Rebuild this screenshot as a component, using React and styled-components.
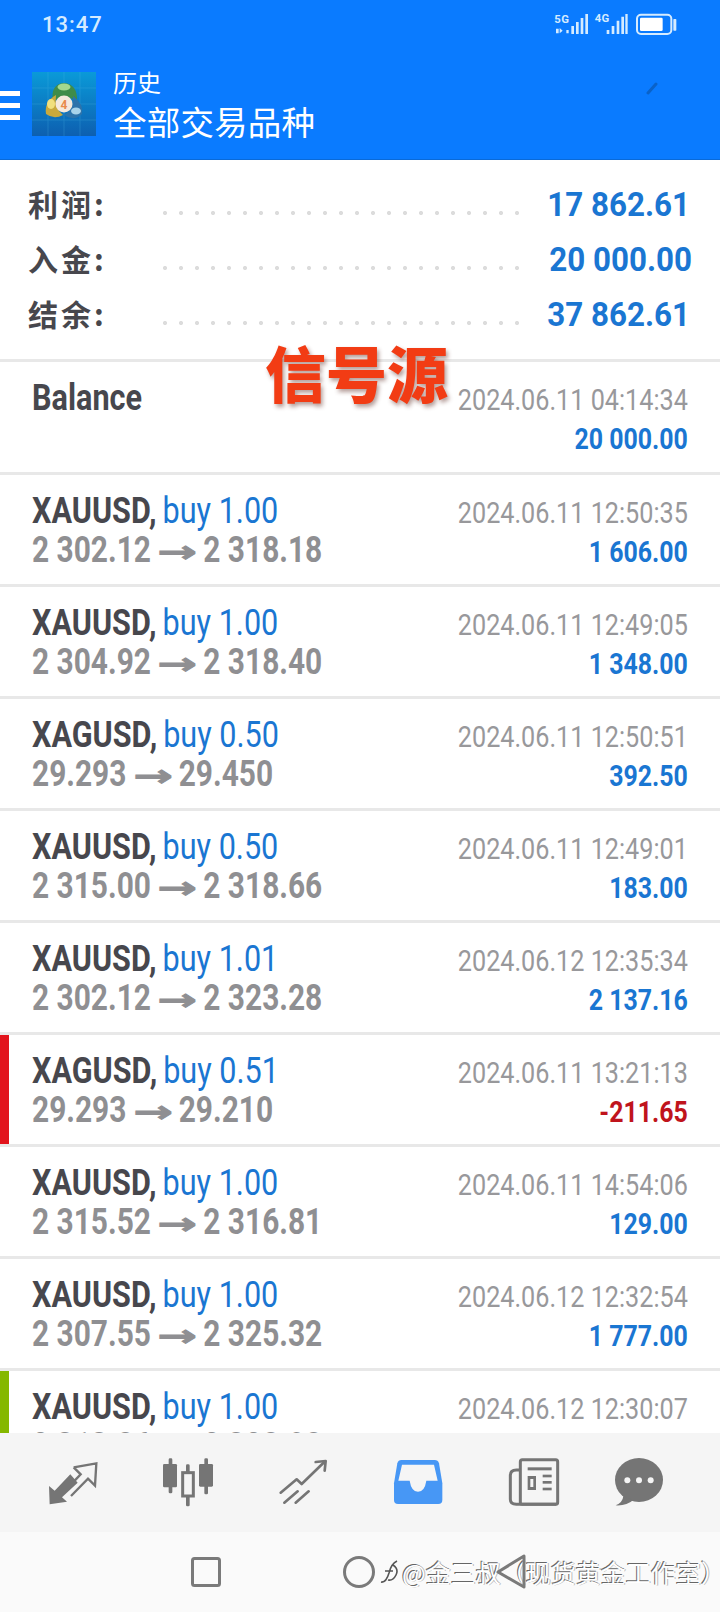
import React from "react";
import styled, { createGlobalStyle } from "styled-components";

const GlobalStyle = createGlobalStyle`
  html, body {
    margin: 0;
    padding: 0;
    background: #fff;
    font-family: Roboto, "Noto Sans CJK SC", sans-serif;
  }
`;

const Page = styled.div`
  position: relative;
  display: flex;
  flex-direction: column;
  width: 720px;
  height: 1612px;
  overflow: hidden;
`;

const Header = styled.header`
  flex: none;
  height: 160px;
  box-sizing: border-box;
  background: #0a7bff;
  border-bottom: 1px solid #0a6ad8;
  color: #fff;
`;

const StatusBar = styled.div`
  display: flex;
  justify-content: space-between;
  align-items: center;
  height: 48px;
  padding: 0 42px 0 42px;
  color: #d5ebff;
  font-size: 22px;
  font-weight: 500;
  letter-spacing: 1px;
`;

const AppBar = styled.div`
  position: relative;
  display: flex;
  align-items: center;
  height: 64px;
  margin-top: 24px;
`;

const Burger = styled.div`
  display: flex;
  flex-direction: column;
  gap: 7px;
  width: 20px;
  margin: 3px 12px 0 0;
  span {
    display: block;
    height: 5px;
    background: #fff;
  }
`;

const Titles = styled.div`
  margin-left: 17px;
  font-family: "Noto Sans CJK SC", sans-serif;
`;

const SubTitle = styled.div`
  font-size: 24px;
  line-height: 32px;
  height: 33px;
`;

const Title = styled.div`
  font-size: 33.5px;
  line-height: 44px;
  letter-spacing: 0.2px;
`;

const Tick = styled.svg`
  position: absolute;
  left: 645px;
  top: 9px;
`;

const Summary = styled.section`
  flex: none;
  height: 199px;
  box-sizing: border-box;
  padding-top: 16px;
`;

const SummaryRow = styled.div`
  display: flex;
  align-items: center;
  height: 55px;
  padding: 0 30px 0 28px;
`;

const SummaryLabel = styled.span`
  width: 135px;
  flex: none;
  margin-top: -2px;
  font-family: "Noto Sans CJK SC", sans-serif;
  font-size: 30px;
  font-weight: 700;
  color: #47474d;
  letter-spacing: 3px;
`;

const Leader = styled.span`
  flex: none;
  width: 360px;
  height: 4px;
  margin-top: 18px;
  background: radial-gradient(circle at 2px 2px, #dcdcdc 2px, transparent 2.2px) 0 0 / 16px 4px repeat-x;
`;

const SummaryValue = styled.span`
  flex: 1;
  margin-top: 2px;
  text-align: right;
  font-size: 33px;
  font-weight: 700;
  color: #1a76d2;
  white-space: nowrap;
  transform: scaleX(0.95);
  transform-origin: right center;
  margin-right: ${(p) => (p.$wide ? -2 : 0)}px;
`;

const List = styled.div`
  flex: 1;
  min-height: 0;
  overflow: hidden;
`;

const Row = styled.div`
  position: relative;
  display: flex;
  justify-content: space-between;
  box-sizing: border-box;
  height: ${(p) => p.$height || 112}px;
  padding: 17px 32px 0;
  border-top: 3px solid #e8e8e8;
  &::before {
    content: "";
    display: ${(p) => (p.$mark ? "block" : "none")};
    position: absolute;
    left: 0;
    top: 0;
    bottom: 0;
    width: 9px;
    background: ${(p) => p.$mark};
  }
`;

const Left = styled.div`
  flex: none;
`;

const Right = styled.div`
  flex: none;
  text-align: right;
`;

const Line = styled.div`
  white-space: nowrap;
  font-size: ${(p) => p.$size || 36}px;
  line-height: 38px;
  font-weight: 700;
  transform: scaleX(${(p) => p.$squeeze || 0.85});
  transform-origin: ${(p) => (p.$right ? "right" : "left")} center;
`;

const Symbol = styled.span`
  color: #47474d;
`;

const Deal = styled.span`
  margin-left: -2px;
  color: #1a76d2;
  font-weight: 400;
`;

const Prices = styled(Line)`
  margin-top: 1px;
  color: #8f8f92;
`;

const Arrow = styled.span`
  display: inline-block;
  margin: 0 10px;
  font-family: "DejaVu Sans", sans-serif;
  font-size: 30px;
  line-height: 1;
  transform: scaleX(1.9);
  -webkit-text-stroke: 0.9px #8f8f92;
`;

const DateLine = styled(Line)`
  color: #98989b;
  font-weight: 400;
  margin-top: 2px;
`;

const Amount = styled(Line)`
  margin-top: 1px;
  color: ${(p) => (p.$loss ? "#c0141c" : "#1a76d2")};
`;

const BottomNav = styled.nav`
  flex: none;
  display: grid;
  grid-template-columns: repeat(5, 115px) 98px;
  justify-items: center;
  align-items: center;
  height: 99px;
  padding: 0 0 0 15px;
  background: #f5f5f5;
`;

const NavIcon = styled.svg`
  display: block;
  width: 60px;
  height: 60px;
  margin-top: -2px;
`;

const SystemBar = styled.div`
  flex: none;
  position: relative;
  height: 80px;
  background: #fafafa;
`;

const SystemIcons = styled.svg`
  display: block;
  position: relative;
  z-index: 1;
`;

const Watermark = styled.div`
  position: absolute;
  left: 380px;
  top: 24px;
  display: flex;
  align-items: center;
  gap: 2px;
  height: 32px;
  font-family: "Noto Sans CJK SC", sans-serif;
  font-size: 25px;
  white-space: nowrap;
  color: #fff;
  text-shadow: -1px -1px 0 #666, 1px 0 0 #bbb;
`;

const Stamp = styled.div`
  position: absolute;
  left: 265px;
  top: 332px;
  font-family: "Noto Sans CJK SC", sans-serif;
  font-size: 61px;
  font-weight: 900;
  line-height: 80px;
  color: #f23c14;
  white-space: nowrap;
  text-shadow: 2px 3px 4px rgba(90, 40, 30, 0.45);
`;

const deals = [
  { s: "XAUUSD", v: "1.00", p: ["2 302.12", "2 318.18"], d: "2024.06.11 12:50:35", a: "1 606.00" },
  { s: "XAUUSD", v: "1.00", p: ["2 304.92", "2 318.40"], d: "2024.06.11 12:49:05", a: "1 348.00" },
  { s: "XAGUSD", v: "0.50", p: ["29.293", "29.450"], d: "2024.06.11 12:50:51", a: "392.50" },
  { s: "XAUUSD", v: "0.50", p: ["2 315.00", "2 318.66"], d: "2024.06.11 12:49:01", a: "183.00" },
  { s: "XAUUSD", v: "1.01", p: ["2 302.12", "2 323.28"], d: "2024.06.12 12:35:34", a: "2 137.16" },
  { s: "XAGUSD", v: "0.51", p: ["29.293", "29.210"], d: "2024.06.11 13:21:13", a: "-211.65", loss: true, mark: "#e2141c" },
  { s: "XAUUSD", v: "1.00", p: ["2 315.52", "2 316.81"], d: "2024.06.11 14:54:06", a: "129.00" },
  { s: "XAUUSD", v: "1.00", p: ["2 307.55", "2 325.32"], d: "2024.06.12 12:32:54", a: "1 777.00" },
  { s: "XAUUSD", v: "1.00", p: ["2 313.86", "2 328.08"], d: "2024.06.12 12:30:07", a: "1 522.00", mark: "#85b800" },
];

const totals = [
  { label: "利润:", value: "17 862.61" },
  { label: "入金:", value: "20 000.00", wide: true },
  { label: "结余:", value: "37 862.61" },
];

const StatusIcons = () => (
  <svg width="124" height="28" viewBox="170 30 372 84" fill="#d5ebff">
    <text x="171" y="68" fontFamily="Roboto" fontWeight="700" fontSize="34">5G</text>
    <path d="M176 86h8v14h-8zM187 84l9 8-9 8zM207 90h7v10h-7zM222 78h8v24h-8zM236 66h8v36h-8zM250 54h8v48h-8zM264 42h8v60h-8z" />
    <text x="292" y="66" fontFamily="Roboto" fontWeight="700" fontSize="34">4G</text>
    <path d="M328 90h8v12h-8zM343 78h8v24h-8zM358 62h8v40h-8zM372 50h8v52h-8zM384 42h7v60h-7z" />
    <rect x="419" y="44" width="103" height="58" rx="12" fill="none" stroke="#d5ebff" strokeWidth="6" />
    <rect x="428" y="53" width="68" height="40" rx="4" fill="#fff" />
    <rect x="528" y="57" width="9" height="35" rx="2" />
  </svg>
);

const MetaLogo = () => (
  <svg width="64" height="64" viewBox="0 0 64 64">
    <defs>
      <linearGradient id="tile" x1="0" y1="0" x2="0" y2="1">
        <stop offset="0" stopColor="#0a9ad8" />
        <stop offset="1" stopColor="#0d5fb0" />
      </linearGradient>
    </defs>
    <rect width="64" height="64" fill="url(#tile)" />
    <path d="M0 16h64M0 32h64M0 48h64M16 0v64M32 0v64M48 0v64" stroke="#4fb8e6" strokeWidth="1" opacity="0.25" />
    <path d="M21 30 Q18 12 32 11 Q46 12 45 30 Q33 20 21 30 Z" fill="#3f8c4a" />
    <ellipse cx="32" cy="15" rx="6.5" ry="3.5" fill="#a3d88f" />
    <path d="M24 23 Q12 30 14 42 Q22 48 31 43 Q22 36 24 23 Z" fill="#c9a93c" />
    <ellipse cx="19" cy="32" rx="4" ry="5" fill="#f1e07d" />
    <path d="M41 24 Q52 32 50 42 Q42 50 32 43 Q42 38 41 24 Z" fill="#2c73ab" />
    <ellipse cx="44" cy="39" rx="5" ry="3.5" fill="#a7d3ea" />
    <circle cx="32" cy="32" r="8.5" fill="#f5e9dc" />
    <text x="32" y="36.5" textAnchor="middle" fontFamily="Roboto" fontWeight="700" fontSize="12" fill="#e88a4a">4</text>
  </svg>
);

const NavSvg = ({ cx, children }) => (
  <NavIcon viewBox={`${cx - 90} 96 180 180`}>{children}</NavIcon>
);

const App = () => (
  <Page>
    <GlobalStyle />
    <Header>
      <StatusBar>
        <span>13:47</span>
        <StatusIcons />
      </StatusBar>
      <AppBar>
        <Burger>
          <span />
          <span />
          <span />
        </Burger>
        <MetaLogo />
        <Titles>
          <SubTitle>历史</SubTitle>
          <Title>全部交易品种</Title>
        </Titles>
        <Tick width="14" height="14" viewBox="0 0 14 14">
          <path d="M3 12 L11 3" stroke="#0a62c8" strokeWidth="3" strokeLinecap="round" />
        </Tick>
      </AppBar>
    </Header>

    <Summary>
      {totals.map((t) => (
        <SummaryRow key={t.label}>
          <SummaryLabel>{t.label}</SummaryLabel>
          <Leader />
          <SummaryValue $wide={t.wide}>{t.value}</SummaryValue>
        </SummaryRow>
      ))}
    </Summary>

    <List>
      <Row $height={113}>
        <Left>
          <Line $size={36}>
            <Symbol>Balance</Symbol>
          </Line>
        </Left>
        <Right>
          <DateLine $right $size={30} $squeeze={0.84}>2024.06.11 04:14:34</DateLine>
          <Amount $right $size={30} $squeeze={0.83}>20 000.00</Amount>
        </Right>
      </Row>
      {deals.map((d) => (
        <Row key={d.d} $mark={d.mark}>
          <Left>
            <Line>
              <Symbol>{d.s},</Symbol> <Deal>buy {d.v}</Deal>
            </Line>
            <Prices $squeeze={0.83}>
              {d.p[0]} <Arrow>→</Arrow> {d.p[1]}
            </Prices>
          </Left>
          <Right>
            <DateLine $right $size={30} $squeeze={0.84}>{d.d}</DateLine>
            <Amount $right $size={30} $squeeze={0.83} $loss={d.loss}>{d.a}</Amount>
          </Right>
        </Row>
      ))}
    </List>

    <BottomNav>
      <NavSvg cx={220}>
        <path d="M148 198 L165 212 L212 163 L234 188 L187 232 L202 245 L150 253 Z" fill="#757575" />
        <path d="M222 142 L290 130 L286 197 L265 176 L214 228 M222 142 L243 163 L225 182" fill="none" stroke="#757575" strokeWidth="7" />
      </NavSvg>
      <NavSvg cx={565}>
        <g fill="#757575">
          <rect x="507" y="115" width="11" height="105" rx="4" />
          <rect x="490" y="132" width="42" height="70" rx="4" />
          <rect x="614" y="115" width="11" height="108" rx="4" />
          <rect x="598" y="132" width="42" height="68" rx="4" />
          <rect x="559" y="133" width="11" height="126" rx="4" />
        </g>
        <rect x="549" y="158" width="32" height="70" fill="#f5f5f5" stroke="#757575" strokeWidth="9" />
      </NavSvg>
      <NavSvg cx={909}>
        <g fill="none" stroke="#757575" strokeWidth="8" strokeLinecap="round" strokeLinejoin="round">
          <path d="M842 218 L890 178 L905 192 L973 126" />
          <path d="M947 126 L977 123 L974 152" />
          <path d="M853 248 L893 214 M887 248 L926 214" />
        </g>
      </NavSvg>
      <NavSvg cx={1255}>
        <path d="M1205 120 H1305 Q1315 120 1318 130 L1328 190 V240 Q1328 252 1316 252 H1195 Q1183 252 1183 240 V190 L1193 130 Q1196 120 1205 120 Z" fill="#4797f5" />
        <path d="M1207 134 H1303 L1314 182 H1280 Q1275 215 1255 215 Q1235 215 1230 182 H1196 Z" fill="#f5f5f5" />
      </NavSvg>
      <NavSvg cx={1600}>
        <g fill="none" stroke="#757575" strokeWidth="9">
          <rect x="1562" y="119" width="112" height="134" rx="6" />
          <path d="M1562 150 H1550 Q1532 150 1532 166 V238 Q1532 253 1550 253 H1670" />
        </g>
        <g fill="#757575">
          <rect x="1584" y="142" width="72" height="9" />
          <path d="M1584 168 H1609 V210 H1584 Z M1592 177 V201 H1601 V177 Z" fillRule="evenodd" />
          <rect x="1629" y="164" width="27" height="8" />
          <rect x="1629" y="183" width="27" height="8" />
          <rect x="1629" y="203" width="27" height="8" />
        </g>
      </NavSvg>
      <NavSvg cx={1917}>
        <ellipse cx="1917" cy="180" rx="72" ry="66" fill="#757575" />
        <path d="M1870 228 Q1868 248 1847 256 Q1880 258 1900 240 Z" fill="#757575" />
        <circle cx="1882" cy="181" r="9" fill="#f5f5f5" />
        <circle cx="1917" cy="181" r="9" fill="#f5f5f5" />
        <circle cx="1952" cy="181" r="9" fill="#f5f5f5" />
      </NavSvg>
    </BottomNav>

    <SystemBar>
      <SystemIcons width="720" height="80" viewBox="0 1532 720 80">
        <g fill="none" stroke="#7a7a7a" strokeWidth="3">
          <rect x="192.5" y="1558.5" width="27" height="27" rx="2" />
          <circle cx="359" cy="1572" r="14.5" />
          <path d="M498 1572 L524 1556 V1587 Z" strokeLinejoin="round" />
        </g>
      </SystemIcons>
      <Watermark>
        <svg width="20" height="28" viewBox="0 0 20 28">
          <path d="M1 24 Q6 25 9 15 Q11 6 17 3 M5 13 H13 M13 7 Q19 11 16 17 Q13 23 8 22" fill="none" stroke="#555" strokeWidth="1.6" />
        </svg>
        <span>@金三叔（现货黄金工作室）</span>
      </Watermark>
    </SystemBar>

    <Stamp>信号源</Stamp>
  </Page>
);

export default App;
